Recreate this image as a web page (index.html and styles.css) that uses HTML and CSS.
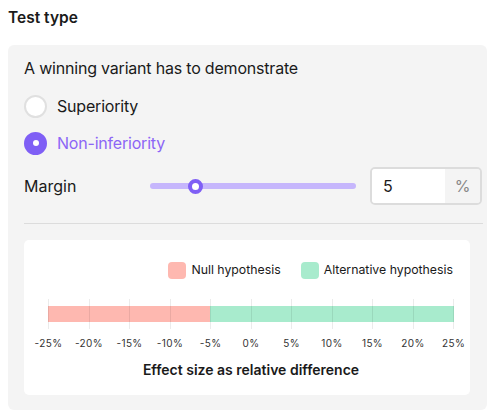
FILE: index.html
```html
<!DOCTYPE html>
<html lang="en">
<head>
    <meta charset="UTF-8">
    <meta name="viewport" content="width=device-width, initial-scale=1.0">
    <title>Test type</title>
    <link rel="stylesheet" href="styles.css">
</head>
<body>
    <h2 class="section-title">Test type</h2>

    <div class="panel">
        <p class="prompt">A winning variant has to demonstrate</p>

        <div class="radio-group">
            <label class="radio">
                <span class="radio-dot"></span>
                <span>Superiority</span>
            </label>
            <label class="radio checked">
                <span class="radio-dot"></span>
                <span>Non-inferiority</span>
            </label>
        </div>

        <div class="margin-row">
            <span class="margin-label">Margin</span>
            <input class="slider" type="range" min="0" max="25" value="5">
            <div class="number-input">
                <input type="text" value="5">
                <span class="unit">%</span>
            </div>
        </div>

        <hr class="divider">

        <div class="chart-card">
            <div class="legend">
                <span class="legend-item"><i class="swatch null"></i>Null hypothesis</span>
                <span class="legend-item"><i class="swatch alt"></i>Alternative hypothesis</span>
            </div>

            <div class="plot">
                <div class="bar">
                    <div class="bar-null" style="width: 40%"></div>
                    <div class="bar-alt" style="width: 60%"></div>
                </div>
                <div class="grid-lines">
                    <span></span><span></span><span></span><span></span><span></span><span></span>
                    <span></span><span></span><span></span><span></span><span></span>
                </div>
            </div>

            <div class="ticks">
                <span>-25%</span><span>-20%</span><span>-15%</span><span>-10%</span><span>-5%</span><span>0%</span>
                <span>5%</span><span>10%</span><span>15%</span><span>20%</span><span>25%</span>
            </div>

            <div class="axis-title">Effect size as relative difference</div>
        </div>
    </div>
</body>
</html>
```

FILE: styles.css
```css
body {
    font-family: Inter, "Noto Sans", sans-serif;
    color: #1a1a1a;
    margin: 0;
    padding: 8px;
    background: #fff;
}
.section-title {
    font-size: 15.5px;
    font-weight: 600;
    line-height: 20px;
    margin: 0 0 17px;
}
.panel {
    background: #f4f4f4;
    border-radius: 6px;
    padding: 12px 4px 15px 16px;
    width: 459px;
}
.prompt {
    font-size: 16px;
    line-height: 22px;
    margin: 0;
    letter-spacing: -0.2px;
}
.radio-group {
    display: flex;
    flex-direction: column;
    gap: 7px;
    margin-top: 12px;
}
.radio {
    display: flex;
    align-items: center;
    gap: 10px;
    height: 30px;
    font-size: 16px;
    letter-spacing: -0.2px;
}
.radio-dot {
    width: 19px;
    height: 19px;
    border-radius: 50%;
    background: #fff;
    border: 2px solid #e0e0e0;
}
.radio.checked {
    color: #8c66f6;
}
.radio.checked .radio-dot {
    background: #7f5ff5;
    border-color: #7f5ff5;
    display: flex;
    align-items: center;
    justify-content: center;
}
.radio.checked .radio-dot::after {
    content: "";
    width: 6px;
    height: 6px;
    border-radius: 50%;
    background: #fff;
}
.margin-row {
    display: flex;
    align-items: center;
    height: 38px;
    margin-top: 9px;
}
.margin-label {
    width: 126px;
    font-size: 16px;
}
.slider {
    -webkit-appearance: none;
    appearance: none;
    width: 206px;
    margin: 0 14px 0 0;
    background: transparent;
    height: 16px;
}
.slider::-webkit-slider-runnable-track {
    height: 6px;
    border-radius: 3px;
    background: #c6b6fc;
}
.slider::-webkit-slider-thumb {
    -webkit-appearance: none;
    width: 15px;
    height: 15px;
    margin-top: -4.5px;
    border-radius: 50%;
    background: #fff;
    border: 4px solid #7f5ff5;
    box-sizing: border-box;
}
.number-input {
    display: flex;
    width: 108px;
    height: 34px;
    border: 2px solid #dcdcdc;
    border-radius: 5px;
    overflow: hidden;
}
.number-input input {
    width: 62px;
    border: none;
    outline: none;
    padding: 0 0 0 11px;
    font: inherit;
    font-size: 16px;
    color: #1a1a1a;
    background: #fff;
}
.unit {
    flex: 1;
    display: flex;
    align-items: center;
    justify-content: center;
    background: #f4f4f4;
    color: #888;
    font-size: 16px;
}
.divider {
    border: none;
    border-top: 1px solid #dcdcdc;
    margin: 18px 0 16px;
}
.chart-card {
    background: #fff;
    border-radius: 5px;
    width: 406px;
    height: 134px;
    padding: 21px 16px 0 24px;
    margin-right: 13px;
}
.legend {
    display: flex;
    justify-content: flex-end;
    gap: 20px;
    font-size: 12.3px;
    line-height: 18px;
    margin-right: 1px;
}
.legend-item {
    display: flex;
    align-items: center;
    gap: 5px;
}
.swatch {
    width: 18px;
    height: 17px;
    border-radius: 4px;
}
.swatch.null,
.bar-null {
    background: #feb8b0;
}
.swatch.alt,
.bar-alt {
    background: #a8ebcd;
}
.plot {
    display: grid;
    height: 30px;
    margin-top: 20px;
}
.plot > * {
    grid-area: 1 / 1;
}
.bar {
    align-self: center;
    display: flex;
    height: 16px;
}
.grid-lines {
    display: flex;
    justify-content: space-between;
}
.grid-lines span {
    width: 1px;
    background: rgba(0, 0, 0, 0.08);
}
.ticks {
    display: flex;
    justify-content: space-between;
    margin-top: 8px;
    font-size: 10px;
    line-height: 12px;
    letter-spacing: 0.4px;
    color: #333;
}
.ticks span {
    width: 1px;
    display: flex;
    justify-content: center;
    white-space: nowrap;
}
.axis-title {
    text-align: center;
    font-size: 14px;
    font-weight: 600;
    line-height: 18px;
    margin-top: 12px;
}
```
